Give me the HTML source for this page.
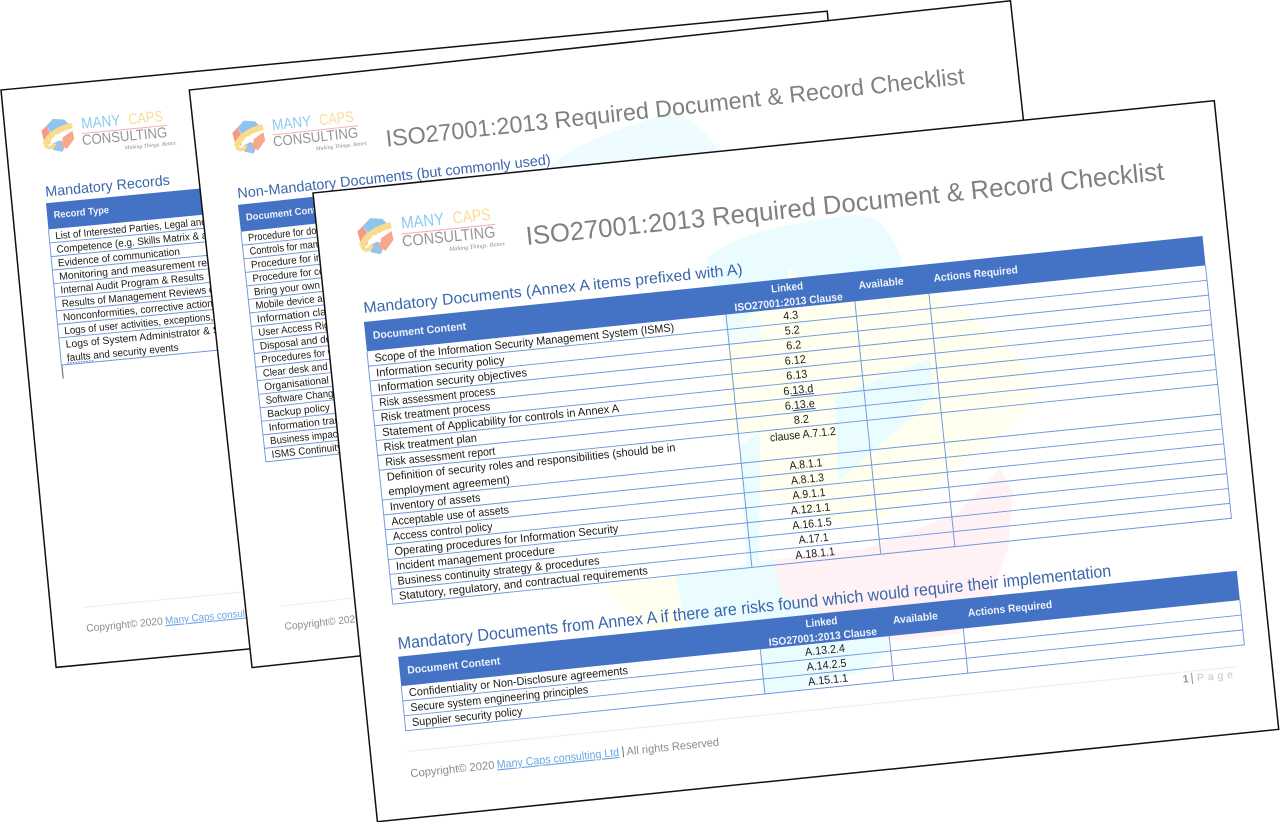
<!DOCTYPE html>
<html><head><meta charset="utf-8"><title>ISO27001:2013 Required Document &amp; Record Checklist</title>
<style>
html,body{margin:0;padding:0;background:#fff;width:1280px;height:822px;overflow:hidden}
svg{display:block;filter:blur(.35px)}
text{font-family:"Liberation Sans",sans-serif}
.pg{fill:#fff;stroke:#111;stroke-width:1.5}
.t{fill:#808080}
.h{fill:#3a66ad}
.r{fill:#1a1a1a;font-size:11.4px}
.r2{fill:#1a1a1a;font-size:10.4px}
.w{fill:#eef3fb;font-weight:bold;font-size:10.8px}
.w2{fill:#eef3fb;font-weight:bold;font-size:10px}
.g{stroke:#6f97dc;stroke-width:.95;fill:none}
.f{fill:#8c8c8c}
.l{fill:#6aa6e6;text-decoration:underline}
.m{text-anchor:middle}
</style></head><body>
<svg width="1280" height="822" viewBox="0 0 1280 822" xmlns="http://www.w3.org/2000/svg">

<!-- PAGE 3 (back) -->
<g transform="translate(1,90) rotate(-5.45)">
<rect class="pg" width="830" height="580"/>
<g transform="translate(51.8,50.1) scale(.912) translate(-57.3,-48.8)">
<g transform="translate(57.3,48.8)">
<path d="M-11,-11L-3,-18L9,-16L15,-9L2,-7L-6,-2Z" fill="#8fc4ec"/><path d="M-17,-6L-11,-11L-6,0L-9,9L-15,6Z" fill="#f39a86"/><path d="M-6,9L2,6L8,11L4,19L-6,16Z" fill="#9cc2e6"/><path d="M6,3L17,-3L18,6L9,16L3,12Z" fill="#f6a78c"/><path d="M-14,9C-10,0 0,-6 17,-9" stroke="#fbdc8e" stroke-width="6.5" fill="none"/><path d="M-14,9C-13,14 -7,15 -4,9" stroke="#fbdc8e" stroke-width="4" fill="none"/><circle cx="-1" cy="2" r="2.5" fill="#fff"/>
</g>
<text x="84.6" y="44.6" font-size="17" fill="#8ccbef" textLength="43" lengthAdjust="spacingAndGlyphs">MANY</text>
<text x="136.4" y="44.8" font-size="17" fill="#fbdc9a" textLength="38" lengthAdjust="spacingAndGlyphs">CAPS</text>
<line x1="84" y1="49.8" x2="178" y2="49.8" stroke="#f7a9a9" stroke-width="1"/>
<text x="83.7" y="62.5" font-size="16" fill="#969696" textLength="93.7" lengthAdjust="spacingAndGlyphs">CONSULTING</text>
<text x="129.7" y="71.6" font-size="6" font-style="italic" fill="#888" style="font-family:'Liberation Serif',serif" textLength="57" lengthAdjust="spacingAndGlyphs">Making Things. Better.</text>
</g>
<text class="h" x="34.4" y="110.4" font-size="14.5" textLength="125" lengthAdjust="spacingAndGlyphs">Mandatory Records</text>
<rect x="34" y="117" width="400" height="26.3" fill="#4472c4"/>
<text class="w2" x="40.6" y="132.7" textLength="55.5" lengthAdjust="spacingAndGlyphs">Record Type</text>
<path class="g" d="M34,143.3V279.6M34,156.9H434M34,170.6H434M34,184.2H434M34,197.8H434M34,211.5H434M34,225.1H434M34,238.7H434M34,252.3H434M34,279.6H434"/>
<text class="r2" x="40.2" y="153.8" textLength="204" lengthAdjust="spacingAndGlyphs">List of Interested Parties, Legal and Contractual</text>
<text class="r2" x="40.2" y="167.4" textLength="194" lengthAdjust="spacingAndGlyphs">Competence (e.g. Skills Matrix &amp; appraisals)</text>
<text class="r2" x="40.2" y="181.1" textLength="122.5" lengthAdjust="spacingAndGlyphs">Evidence of communication</text>
<text class="r2" x="40.2" y="194.7" textLength="170" lengthAdjust="spacingAndGlyphs">Monitoring and measurement results</text>
<text class="r2" x="40.2" y="208.3" textLength="144" lengthAdjust="spacingAndGlyphs">Internal Audit Program &amp; Results</text>
<text class="r2" x="40.2" y="222" textLength="183" lengthAdjust="spacingAndGlyphs">Results of Management Reviews of ISMS</text>
<text class="r2" x="40.2" y="235.6" textLength="207" lengthAdjust="spacingAndGlyphs">Nonconformities, corrective actions and results</text>
<text class="r2" x="40.2" y="249.2" textLength="200" lengthAdjust="spacingAndGlyphs">Logs of user activities, exceptions, and events</text>
<text class="r2" x="40.2" y="262.8" textLength="272" lengthAdjust="spacingAndGlyphs">Logs of System Administrator &amp; System Operator activities,</text>
<text class="r2" x="40.2" y="276.4" textLength="112" lengthAdjust="spacingAndGlyphs">faults and security events</text>
<path d="M40.2,278.2H66" stroke="#3a66c4" stroke-width=".9" stroke-dasharray="1.5 1.2"/>
<path d="M34.5,280V293" stroke="#777" stroke-width="1.2"/>
<line x1="32.8" y1="522.8" x2="790" y2="522.8" stroke="#ececec"/>
<text class="f" x="33.8" y="547.4" font-size="10.4" textLength="76.7" lengthAdjust="spacingAndGlyphs">Copyright© 2020</text>
<text class="l" x="113" y="547.4" font-size="10.4" textLength="112" lengthAdjust="spacingAndGlyphs">Many Caps consulting Ltd</text>
</g>

<!-- PAGE 2 (middle) -->
<g transform="translate(189.3,90) rotate(-6.2)"><rect class="pg" width="826" height="581"/></g>
<path d="M550,166C575,142 620,130 660,115C682,110 702,125 722,155L600,190Z" fill="#eefcff"/>
<g transform="translate(189.3,90) rotate(-6.2)">
<g transform="translate(53.6,52.8) scale(.912) translate(-57.3,-48.8)">
<g transform="translate(57.3,48.8)">
<path d="M-11,-11L-3,-18L9,-16L15,-9L2,-7L-6,-2Z" fill="#8fc4ec"/><path d="M-17,-6L-11,-11L-6,0L-9,9L-15,6Z" fill="#f39a86"/><path d="M-6,9L2,6L8,11L4,19L-6,16Z" fill="#9cc2e6"/><path d="M6,3L17,-3L18,6L9,16L3,12Z" fill="#f6a78c"/><path d="M-14,9C-10,0 0,-6 17,-9" stroke="#fbdc8e" stroke-width="6.5" fill="none"/><path d="M-14,9C-13,14 -7,15 -4,9" stroke="#fbdc8e" stroke-width="4" fill="none"/><circle cx="-1" cy="2" r="2.5" fill="#fff"/>
</g>
<text x="84.6" y="44.6" font-size="17" fill="#8ccbef" textLength="43" lengthAdjust="spacingAndGlyphs">MANY</text>
<text x="136.4" y="44.8" font-size="17" fill="#fbdc9a" textLength="38" lengthAdjust="spacingAndGlyphs">CAPS</text>
<line x1="84" y1="49.8" x2="178" y2="49.8" stroke="#f7a9a9" stroke-width="1"/>
<text x="83.7" y="62.5" font-size="16" fill="#969696" textLength="93.7" lengthAdjust="spacingAndGlyphs">CONSULTING</text>
<text x="129.7" y="71.6" font-size="6" font-style="italic" fill="#888" style="font-family:'Liberation Serif',serif" textLength="57" lengthAdjust="spacingAndGlyphs">Making Things. Better.</text>
</g>
<text class="t" x="190" y="77.7" font-size="23.5" textLength="582" lengthAdjust="spacingAndGlyphs">ISO27001:2013 Required Document &amp; Record Checklist</text>
<text class="h" x="36.6" y="112.9" font-size="14.5" textLength="315" lengthAdjust="spacingAndGlyphs">Non-Mandatory Documents (but commonly used)</text>
<rect x="36" y="119.5" width="400" height="27" fill="#4472c4"/>
<text class="w2" x="42.5" y="136" textLength="85" lengthAdjust="spacingAndGlyphs">Document Content</text>
<path class="g" d="M36,146.5V378M36,160.1H436M36,173.7H436M36,187.4H436M36,201H436M36,214.6H436M36,228.2H436M36,241.8H436M36,255.5H436M36,269.1H436M36,282.7H436M36,296.3H436M36,310H436M36,323.6H436M36,337.2H436M36,350.8H436M36,364.4H436M36,378H436"/>
<text class="r2" x="42.5" y="156.8" textLength="129" lengthAdjust="spacingAndGlyphs">Procedure for document control</text>
<text class="r2" x="42.5" y="170.4" textLength="125" lengthAdjust="spacingAndGlyphs">Controls for managing records</text>
<text class="r2" x="42.5" y="184" textLength="120" lengthAdjust="spacingAndGlyphs">Procedure for internal audit</text>
<text class="r2" x="42.5" y="197.7" textLength="133" lengthAdjust="spacingAndGlyphs">Procedure for corrective action</text>
<text class="r2" x="42.5" y="211.3" textLength="126" lengthAdjust="spacingAndGlyphs">Bring your own device policy</text>
<text class="r2" x="42.5" y="224.9" textLength="130" lengthAdjust="spacingAndGlyphs">Mobile device and teleworking</text>
<text class="r2" x="42.5" y="238.5" textLength="146" lengthAdjust="spacingAndGlyphs">Information classification policy</text>
<text class="r2" x="42.5" y="252.1" textLength="112" lengthAdjust="spacingAndGlyphs">User Access Rights policy</text>
<text class="r2" x="42.5" y="265.8" textLength="138" lengthAdjust="spacingAndGlyphs">Disposal and destruction policy</text>
<text class="r2" x="42.5" y="279.4" textLength="170" lengthAdjust="spacingAndGlyphs">Procedures for working in secure areas</text>
<text class="r2" x="42.5" y="293" textLength="148" lengthAdjust="spacingAndGlyphs">Clear desk and clear screen policy</text>
<text class="r2" x="42.5" y="306.6" textLength="118" lengthAdjust="spacingAndGlyphs">Organisational roles policy</text>
<text class="r2" x="42.5" y="320.3" textLength="100" lengthAdjust="spacingAndGlyphs">Software Change policy</text>
<text class="r2" x="42.5" y="333.9" textLength="63" lengthAdjust="spacingAndGlyphs">Backup policy</text>
<text class="r2" x="42.5" y="347.5" textLength="118" lengthAdjust="spacingAndGlyphs">Information transfer policy</text>
<text class="r2" x="42.5" y="361.1" textLength="108" lengthAdjust="spacingAndGlyphs">Business impact analysis</text>
<text class="r2" x="42.5" y="374.7" textLength="92" lengthAdjust="spacingAndGlyphs">ISMS Continuity plan</text>
<line x1="35.5" y1="522.9" x2="790" y2="522.9" stroke="#ececec"/>
<text class="f" x="36.8" y="547.1" font-size="10.4" textLength="76.7" lengthAdjust="spacingAndGlyphs">Copyright© 2020</text>
</g>

<!-- PAGE 1 (front) -->
<g transform="translate(313,193) rotate(-5.85)"><rect class="pg" width="906" height="632"/></g>
<!-- faint watermark, drawn in screen space -->
<g transform="translate(600,200) scale(.33333)">
<path d="M320,175C380,120 480,90 600,70C700,50 790,30 840,70C880,110 900,160 905,190L770,320L380,400Z" fill="#ebfcff"/>
<path d="M380,420L560,240L570,205L600,240L1000,280C1180,370 1300,500 1305,560C1310,640 1200,700 1040,830L840,960L700,965L480,880L475,700L380,700Z" fill="#fffff0"/>
<path d="M380,400L480,350L480,420L380,440Z" fill="#f2fdfc"/>
<path d="M705,590L990,475L1003,590L714,846Z" fill="#ebfcff"/>
<path d="M420,740L480,690L478,1090L440,1100Z" fill="#ebfcff"/>
<path d="M500,1020L520,1080L800,1045L1070,940L1200,805L1240,880L1225,1040L1170,1200L1080,1300L900,1322L860,1320L550,1190Z" fill="#fff1f4"/>
<path d="M225,1130L520,1080L550,1190L860,1320L870,1350L800,1410L600,1470L490,1485L480,1350L260,1280Z" fill="#ebfcff"/>
<path d="M0,1160L225,1130L258,1275L150,1295Z" fill="#fffff0"/>
</g>
<g transform="translate(313,193) rotate(-5.85)">
<g transform="translate(57.3,48.8)">
<path d="M-11,-11L-3,-18L9,-16L15,-9L2,-7L-6,-2Z" fill="#8fc4ec"/><path d="M-17,-6L-11,-11L-6,0L-9,9L-15,6Z" fill="#f39a86"/><path d="M-6,9L2,6L8,11L4,19L-6,16Z" fill="#9cc2e6"/><path d="M6,3L17,-3L18,6L9,16L3,12Z" fill="#f6a78c"/><path d="M-14,9C-10,0 0,-6 17,-9" stroke="#fbdc8e" stroke-width="6.5" fill="none"/><path d="M-14,9C-13,14 -7,15 -4,9" stroke="#fbdc8e" stroke-width="4" fill="none"/><circle cx="-1" cy="2" r="2.5" fill="#fff"/>
</g>
<text x="84.6" y="44.6" font-size="17" fill="#8ccbef" textLength="43" lengthAdjust="spacingAndGlyphs">MANY</text>
<text x="136.4" y="44.8" font-size="17" fill="#fbdc9a" textLength="38" lengthAdjust="spacingAndGlyphs">CAPS</text>
<line x1="84" y1="49.8" x2="178" y2="49.8" stroke="#f7a9a9" stroke-width="1"/>
<text x="83.7" y="62.5" font-size="16" fill="#969696" textLength="93.7" lengthAdjust="spacingAndGlyphs">CONSULTING</text>
<text x="129.7" y="71.6" font-size="6" font-style="italic" fill="#888" style="font-family:'Liberation Serif',serif" textLength="57" lengthAdjust="spacingAndGlyphs">Making Things. Better.</text>

<text class="t" x="207.3" y="73.5" font-size="26" textLength="641.4" lengthAdjust="spacingAndGlyphs">ISO27001:2013 Required Document &amp; Record Checklist</text>
<text class="h" x="38.5" y="124.6" font-size="15.5" textLength="381" lengthAdjust="spacingAndGlyphs">Mandatory Documents (Annex A items prefixed with A)</text>

<rect x="37.5" y="133.5" width="843" height="29.5" fill="#4472c4"/>
<text class="w" x="45.1" y="151.4" textLength="93.5" lengthAdjust="spacingAndGlyphs">Document Content</text>
<text class="w m" x="462" y="145.8" textLength="32" lengthAdjust="spacingAndGlyphs">Linked</text>
<text class="w m" x="462" y="160.6" textLength="108.7" lengthAdjust="spacingAndGlyphs">ISO27001:2013 Clause</text>
<text class="w" x="533.4" y="151.2" textLength="45" lengthAdjust="spacingAndGlyphs">Available</text>
<text class="w" x="608.7" y="151.6" textLength="84.6" lengthAdjust="spacingAndGlyphs">Actions Required</text>

<path class="g" d="M37.5,163V417.2H880.5V163M398.5,163V417.2M528,163V417.2M602.5,163V417.2M37.5,178H880.5M37.5,192.9H880.5M37.5,207.9H880.5M37.5,222.8H880.5M37.5,237.8H880.5M37.5,252.7H880.5M37.5,267.7H880.5M37.5,282.6H880.5M37.5,312.5H880.5M37.5,327.5H880.5M37.5,342.4H880.5M37.5,357.4H880.5M37.5,372.3H880.5M37.5,387.3H880.5M37.5,402.2H880.5"/>

<text class="r" x="44.5" y="174.2" textLength="301" lengthAdjust="spacingAndGlyphs">Scope of the Information Security Management System (ISMS)</text>
<text class="r" x="44.5" y="189.2" textLength="129" lengthAdjust="spacingAndGlyphs">Information security policy</text>
<text class="r" x="44.5" y="204.1" textLength="150" lengthAdjust="spacingAndGlyphs">Information security objectives</text>
<text class="r" x="44.5" y="219.1" textLength="116.6" lengthAdjust="spacingAndGlyphs">Risk assessment process</text>
<text class="r" x="44.5" y="234" textLength="110" lengthAdjust="spacingAndGlyphs">Risk treatment process</text>
<text class="r" x="44.5" y="249" textLength="238" lengthAdjust="spacingAndGlyphs">Statement of Applicability for controls in Annex A</text>
<text class="r" x="44.5" y="263.9" textLength="93.5" lengthAdjust="spacingAndGlyphs">Risk treatment plan</text>
<text class="r" x="44.5" y="278.9" textLength="110.5" lengthAdjust="spacingAndGlyphs">Risk assessment report</text>
<text class="r" x="44.5" y="293.8" textLength="290" lengthAdjust="spacingAndGlyphs">Definition of security roles and responsibilities (should be in</text>
<text class="r" x="44.5" y="308.7" textLength="122" lengthAdjust="spacingAndGlyphs">employment agreement)</text>
<text class="r" x="44.5" y="323.7" textLength="91" lengthAdjust="spacingAndGlyphs">Inventory of assets</text>
<text class="r" x="44.5" y="338.7" textLength="118" lengthAdjust="spacingAndGlyphs">Acceptable use of assets</text>
<text class="r" x="44.5" y="353.6" textLength="100" lengthAdjust="spacingAndGlyphs">Access control policy</text>
<text class="r" x="44.5" y="368.6" textLength="225" lengthAdjust="spacingAndGlyphs">Operating procedures for Information Security</text>
<text class="r" x="44.5" y="383.5" textLength="159.5" lengthAdjust="spacingAndGlyphs">Incident management procedure</text>
<text class="r" x="44.5" y="398.5" textLength="203" lengthAdjust="spacingAndGlyphs">Business continuity strategy &amp; procedures</text>
<text class="r" x="44.5" y="413.4" textLength="250" lengthAdjust="spacingAndGlyphs">Statutory, regulatory, and contractual requirements</text>

<g text-anchor="middle">
<text class="r" x="462.7" y="174.2" textLength="15" lengthAdjust="spacingAndGlyphs">4.3</text>
<text class="r" x="462.7" y="189.2" textLength="15" lengthAdjust="spacingAndGlyphs">5.2</text>
<text class="r" x="462.7" y="204.1" textLength="15" lengthAdjust="spacingAndGlyphs">6.2</text>
<text class="r" x="462.7" y="219.1" textLength="21" lengthAdjust="spacingAndGlyphs">6.12</text>
<text class="r" x="462.7" y="234" textLength="21" lengthAdjust="spacingAndGlyphs">6.13</text>
<text class="r" x="462.7" y="249" textLength="30" lengthAdjust="spacingAndGlyphs">6.13.d</text>
<text class="r" x="462.7" y="263.9" textLength="30" lengthAdjust="spacingAndGlyphs">6.13.e</text>
<text class="r" x="462.7" y="278.9" textLength="15" lengthAdjust="spacingAndGlyphs">8.2</text>
<text class="r" x="462.7" y="293.8" textLength="66" lengthAdjust="spacingAndGlyphs">clause A.7.1.2</text>
<text class="r" x="462.7" y="323.7" textLength="33" lengthAdjust="spacingAndGlyphs">A.8.1.1</text>
<text class="r" x="462.7" y="338.7" textLength="33" lengthAdjust="spacingAndGlyphs">A.8.1.3</text>
<text class="r" x="462.7" y="353.6" textLength="33" lengthAdjust="spacingAndGlyphs">A.9.1.1</text>
<text class="r" x="462.7" y="368.6" textLength="39.5" lengthAdjust="spacingAndGlyphs">A.12.1.1</text>
<text class="r" x="462.7" y="383.5" textLength="39.5" lengthAdjust="spacingAndGlyphs">A.16.1.5</text>
<text class="r" x="462.7" y="398.5" textLength="30" lengthAdjust="spacingAndGlyphs">A.17.1</text>
<text class="r" x="462.7" y="413.4" textLength="39.5" lengthAdjust="spacingAndGlyphs">A.18.1.1</text>
</g>
<path d="M455,250.5H478M455,265.5H478" stroke="#2a50b0" stroke-width="1"/>

<text class="h" x="38.4" y="462.6" font-size="17" textLength="717" lengthAdjust="spacingAndGlyphs">Mandatory Documents from Annex A if there are risks found which would require their implementation</text>

<rect x="37.5" y="470" width="843" height="29.5" fill="#4472c4"/>
<text class="w" x="45.1" y="487.9" textLength="93.5" lengthAdjust="spacingAndGlyphs">Document Content</text>
<text class="w m" x="462" y="482.3" textLength="32" lengthAdjust="spacingAndGlyphs">Linked</text>
<text class="w m" x="462" y="497.1" textLength="108.7" lengthAdjust="spacingAndGlyphs">ISO27001:2013 Clause</text>
<text class="w" x="533.4" y="487.7" textLength="45" lengthAdjust="spacingAndGlyphs">Available</text>
<text class="w" x="608.7" y="488.1" textLength="84.6" lengthAdjust="spacingAndGlyphs">Actions Required</text>
<path class="g" d="M37.5,499.5V544.4H880.5V499.5M398.5,499.5V544.4M528,499.5V544.4M602.5,499.5V544.4M37.5,514.5H880.5M37.5,529.4H880.5"/>
<text class="r" x="44.5" y="510.6" textLength="220" lengthAdjust="spacingAndGlyphs">Confidentiality or Non-Disclosure agreements</text>
<text class="r" x="44.5" y="525.6" textLength="178.6" lengthAdjust="spacingAndGlyphs">Secure system engineering principles</text>
<text class="r" x="44.5" y="540.5" textLength="111" lengthAdjust="spacingAndGlyphs">Supplier security policy</text>
<g text-anchor="middle">
<text class="r" x="462.7" y="510.6" textLength="40" lengthAdjust="spacingAndGlyphs">A.13.2.4</text>
<text class="r" x="462.7" y="525.6" textLength="40" lengthAdjust="spacingAndGlyphs">A.14.2.5</text>
<text class="r" x="462.7" y="540.5" textLength="40" lengthAdjust="spacingAndGlyphs">A.15.1.1</text>
</g>

<line x1="36.3" y1="565.3" x2="871" y2="565.3" stroke="#ececec"/>
<text x="815.6" y="576" font-size="11" fill="#999" font-weight="bold">1</text>
<line x1="825" y1="567" x2="825" y2="578" stroke="#999" stroke-width="1.1"/>
<text x="830" y="576" font-size="10.5" fill="#c4c4c4" textLength="36" lengthAdjust="spacing">Page</text>

<text class="f" x="37.7" y="591.2" font-size="11.4" textLength="84.5" lengthAdjust="spacingAndGlyphs">Copyright© 2020</text>
<text class="l" x="124.5" y="591.2" font-size="11.4" textLength="123" lengthAdjust="spacingAndGlyphs">Many Caps consulting Ltd</text>
<line x1="251.5" y1="582" x2="251.5" y2="593" stroke="#666" stroke-width=".9"/>
<text class="f" x="255" y="591.2" font-size="11.4" textLength="93" lengthAdjust="spacingAndGlyphs">All rights Reserved</text>
</g>
</svg>
</body></html>
